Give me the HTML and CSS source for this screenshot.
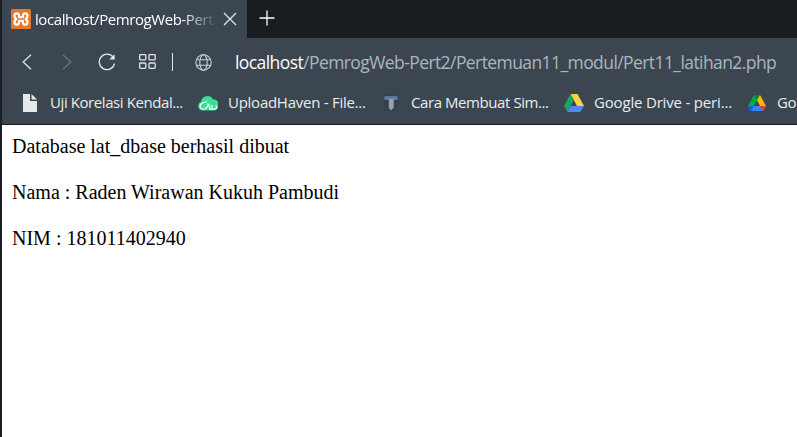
FILE: index.html
```html
<!DOCTYPE html>
<html lang="id">
<head>
<meta charset="utf-8">
<title>localhost/PemrogWeb-Pert2</title>
<link rel="stylesheet" href="styles.css">
</head>
<body>
<div class="browser">
  <header class="tabs">
    <div class="tab">
      <svg class="favicon" viewBox="0 0 20 20"><rect width="20" height="20" rx="1.5" fill="#e8762c"/><path d="M8 8.2V6.6C8 3.6 3.5 3.6 3.5 6.7c0 1.6.8 2.6 1.7 3.3-.9.7-1.7 1.7-1.7 3.3 0 3.1 4.5 3.1 4.5.1v-1.6h4v1.6c0 3 4.5 3 4.5-.1 0-1.6-.8-2.6-1.7-3.3.9-.7 1.7-1.7 1.7-3.3 0-3.1-4.5-3.1-4.5-.1v1.6z" fill="none" stroke="#fff" stroke-width="2.3" stroke-linejoin="round"/></svg>
      <span class="tab-title">localhost/PemrogWeb-Pert</span>
      <svg class="close" viewBox="0 0 14 14"><path d="M1 1l12 12M13 1L1 13"/></svg>
    </div>
    <svg class="plus" viewBox="0 0 16 16"><path d="M8 .5v15M.5 8h15"/></svg>
  </header>
  <nav class="toolbar">
    <svg class="back" viewBox="0 0 10 16"><path d="M9 .7L1.2 8 9 15.3"/></svg>
    <svg class="forward" viewBox="0 0 10 16"><path d="M1 .7L8.8 8 1 15.3"/></svg>
    <svg class="reload" viewBox="0 0 18 18"><path d="M15.1 4.2A7.7 7.7 0 1 0 16.5 10.6"/><path class="solid" d="M16.7 1.2v5.4h-5.4z"/></svg>
    <svg class="grid" viewBox="0 0 17 16"><rect x=".6" y=".6" width="6.2" height="5.3" rx="1"/><rect x="10" y=".6" width="6.2" height="5.3" rx="1"/><rect x=".6" y="9" width="6.2" height="5.3" rx="1"/><rect x="10" y="9" width="6.2" height="5.3" rx="1"/></svg>
    <span class="divider"></span>
    <svg class="globe" viewBox="0 0 17 17"><circle cx="8.5" cy="8.5" r="7.7"/><ellipse cx="8.5" cy="8.5" rx="3.7" ry="7.7"/><path d="M1.5 5.8h14M1.5 11.2h14"/></svg>
    <div class="url"><span class="host">localhost</span>/PemrogWeb-Pert2/Pertemuan11_modul/Pert11_latihan2.php</div>
  </nav>
  <nav class="bookmarks">
    <a class="bookmark"><svg class="icon" viewBox="0 0 20 20"><path d="M3 1h7v7h7v11H3z" fill="#e4e9ec"/><path d="M11.5 1L17 6.5h-5.5z" fill="#e4e9ec"/></svg><span class="label">Uji Korelasi Kendal...</span></a>
    <a class="bookmark"><svg class="icon" viewBox="0 0 20 20"><path d="M4.5 17.5A4.6 4.6 0 0 1 3 8.7 6.5 6.5 0 0 1 15 6.3a5.7 5.7 0 0 1 1.4 11.2z" fill="#3ddc98"/><path d="M9 8.5c-2.200 1-4 .8-5.700 2.200-2.200 2-1.300 5.400 1.700 5.500 2.500.1 4.400-1.700 5-4.400M9.500 10.500l2 2v3.500h6c1.500-.5 1.500-2.800 0-3M14 12v3" fill="none" stroke="#e9fff5" stroke-width="1.300"/></svg><span class="label label-upload">UploadHaven - File...</span></a>
    <a class="bookmark"><svg class="icon" viewBox="0 0 20 20"><path d="M3 2h14v16H3z" fill="#35414f"/><path d="M3.500 3.200h13v3.600H3.500z" fill="#5f80a8"/><path d="M7.800 6h4.900v8.500L10 17.500 7.800 15z" fill="#93a1b0"/></svg><span class="label">Cara Membuat Sim...</span></a>
    <a class="bookmark"><svg class="icon" viewBox="0 0 20 20"><path d="M6.500 1h7L20 13h-7z" fill="#ffd04b"/><path d="M6.500 1l3.500 6L3.500 19 0 13z" fill="#20a464"/><path d="M7 13h13l-3.500 6h-13z" fill="#4a8af4"/></svg><span class="label label-drive">Google Drive - peri...</span></a>
    <a class="bookmark"><svg class="icon" viewBox="0 0 20 20"><path d="M7 2h6l-3 5.200L4 18 1 13z" fill="#00ac47"/><path d="M7 2h6l-3 5.200z" fill="#00832d"/><path d="M13 2l6 11h-6L10 7.200z" fill="#ffba00"/><path d="M1 13h6l-3 5-2-1.400z" fill="#0066da"/><path d="M7 13h6l3 5H4z" fill="#3884fc"/><path d="M13 13h6l-2 4-1 1z" fill="#ea4335"/></svg><span class="label">Go</span></a>
  </nav>
  <main class="page">
    <p>Database lat_dbase berhasil dibuat</p>
    <p>Nama : Raden Wirawan Kukuh Pambudi</p>
    <p>NIM : 181011402940</p>
  </main>
</div>
</body>
</html>
```
FILE: styles.css
```css
* { box-sizing: border-box; }
body { margin: 0; overflow: hidden; background: #1a1d21; }
svg { display: block; flex: none; fill: none; stroke: #dfe5e9; stroke-width: 1.3; }
.browser { width: 797px; height: 437px; display: flex; flex-direction: column; padding-left: 2px; overflow: hidden; font-family: "Open Sans", "Noto Sans", sans-serif; }
.tabs { height: 38px; flex: none; display: flex; background: #191c20; }
.tab { width: 245px; height: 38px; display: flex; align-items: center; padding: 0 0 1px 9px; background: #3b4650; }
.favicon, .icon { width: 20px; height: 20px; stroke: none; }
.tab-title { width: 182px; margin-left: 4px; overflow: hidden; white-space: nowrap; color: #fff; font-size: 15px; line-height: 22px; letter-spacing: -.42px; -webkit-mask-image: linear-gradient(to right, #000 148px, transparent 182px); mask-image: linear-gradient(to right, #000 148px, transparent 182px); }
.close { width: 14px; height: 14px; margin-left: 6px; }
.plus { width: 16px; height: 16px; margin: 10px 0 0 12px; stroke: #fff; }
.toolbar { height: 48px; flex: none; display: flex; align-items: center; background: #3b4650; padding-left: 20px; }
.back { width: 10px; height: 16px; }
.forward { width: 10px; height: 16px; margin-left: 30px; stroke: #69747d; }
.reload { width: 18px; height: 18px; margin-left: 26px; }
.solid { fill: #dfe5e9; stroke: none; }
.grid { width: 17px; height: 16px; margin-left: 23px; }
.divider { width: 1px; height: 18px; margin-left: 16px; background: #dfe5e9; }
.globe { width: 17px; height: 17px; margin-left: 22px; stroke-width: 1.1; stroke: #c9d1d7; }
.url { margin: 0 0 1px 23px; white-space: nowrap; color: #a9b6c2; font-size: 17.5px; line-height: 26px; letter-spacing: -.58px; }
.host { color: #fff; }
.bookmarks { height: 39px; flex: none; display: flex; align-items: center; background: #3b4650; border-bottom: 1px solid #171a1e; padding: 0 0 5px 18px; overflow: hidden; }
.bookmark { width: 183px; flex: none; display: flex; align-items: center; }
.bookmark:first-child { width: 178px; }
.bookmark:last-child { width: 50px; }
.label { margin: 0 0 2px 10px; white-space: nowrap; color: #e8edf0; font-size: 15px; line-height: 22px; letter-spacing: -.42px; }
.label-upload { letter-spacing: -.26px; }
.label-drive { letter-spacing: -.18px; }
.page { flex: 1; background: #fff; padding: 10px 10px; color: #000; font-family: "Liberation Serif", serif; font-size: 20px; line-height: 23px; }
.page p { margin: 0 0 23px; }
```
